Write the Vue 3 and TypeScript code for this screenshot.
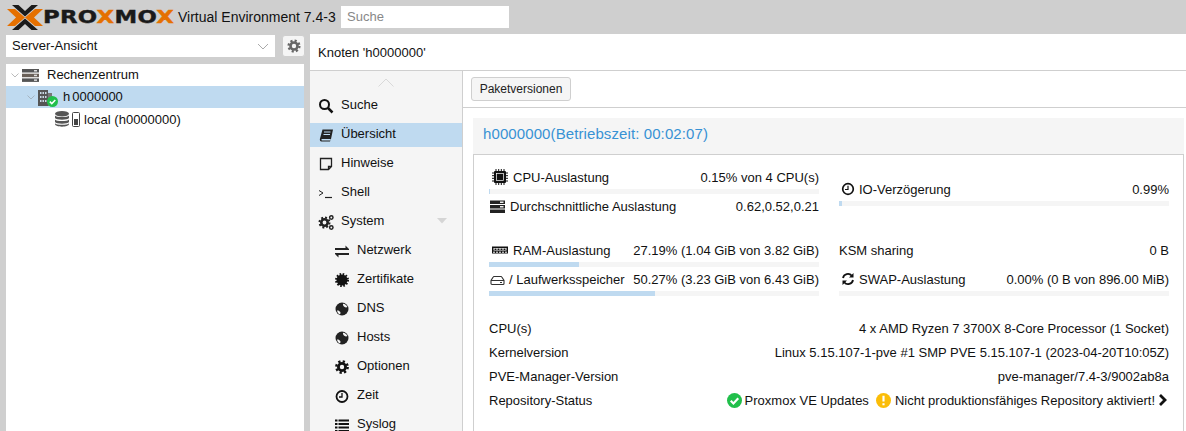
<script setup lang="ts">
const menu = [
  { label: 'Suche', icon: 'search' },
  { label: 'Übersicht', icon: 'book', active: true },
  { label: 'Hinweise', icon: 'note' },
  { label: 'Shell', icon: 'shell' },
  { label: 'System', icon: 'cogs', expand: true },
  { label: 'Netzwerk', icon: 'exchange', sub: true },
  { label: 'Zertifikate', icon: 'cert', sub: true },
  { label: 'DNS', icon: 'globe', sub: true },
  { label: 'Hosts', icon: 'globe', sub: true },
  { label: 'Optionen', icon: 'gear', sub: true },
  { label: 'Zeit', icon: 'clock', sub: true },
  { label: 'Syslog', icon: 'list', sub: true },
]
</script>

<template>
  <div class="app">
    <header class="top">
      <svg class="mark" viewBox="0 0 36 25" width="36" height="25">
        <path d="M0 4h8l10 8.500L8 21H0l9-8.500z" fill="#e57000" />
        <path d="M36 4h-8L18 12.500 28 21h8l-9-8.500z" fill="#e57000" />
        <path d="M5 0h6.500L18 6l6.500-6H31L18 11.500z" fill="#1a1a1a" />
        <path d="M5 25h6.500L18 19l6.500 6H31L18 13.500z" fill="#1a1a1a" />
      </svg>
      <span class="wordbox"><span class="word">PRO<b>X</b>MO<b>X</b></span></span>
      <span class="ve">Virtual Environment 7.4-3</span>
      <input class="search" placeholder="Suche" />
    </header>
    <div class="body">
      <aside class="left">
        <div class="viewrow">
          <div class="combo">
            <span class="lift">Server-Ansicht</span>
            <svg width="12" height="7" viewBox="0 0 12 7"><path d="M1 1l5 5 5-5" fill="none" stroke="#aaa" /></svg>
          </div>
          <button class="gearbtn">
            <svg width="14" height="14" viewBox="0 0 16 16">
              <circle cx="8" cy="8" r="6.200" fill="none" stroke="#666" stroke-width="2.600" stroke-dasharray="2.430 2.430" />
              <circle cx="8" cy="8" r="4" fill="none" stroke="#666" stroke-width="3" />
            </svg>
          </button>
        </div>
        <div class="tree">
          <div class="node n0">
            <svg class="tw" width="8" height="5" viewBox="0 0 8 5"><path d="M.5.5L4 4 7.500.5" fill="none" stroke="#bbb" /></svg>
            <svg class="dc" width="17" height="13" viewBox="0 0 17 13">
              <rect x="0" y="0" width="17" height="3.500" fill="#555" />
              <rect x="0" y="4.700" width="17" height="3.500" fill="#6a6058" />
              <rect x="0" y="9.400" width="17" height="3.500" fill="#555" />
              <rect x="12" y="1" width="3" height="1.500" fill="#ddd" />
              <rect x="12" y="5.700" width="3" height="1.500" fill="#ddd" />
              <rect x="12" y="10.400" width="3" height="1.500" fill="#ddd" />
            </svg>
            <span class="t0">Rechenzentrum</span>
          </div>
          <div class="node n1">
            <svg class="tw" width="8" height="5" viewBox="0 0 8 5"><path d="M.5.5L4 4 7.500.5" fill="none" stroke="#a5b4c0" /></svg>
            <span class="srv">
              <svg width="20" height="18" viewBox="0 0 20 18">
                <rect x="0" y="2" width="10" height="16" fill="#555" />
                <rect x="10" y="5" width="4" height="13" fill="#777" />
                <path d="M2 4h1.500v2H2zM4.500 4H6v2H4.500zM7 4h1.500v2H7zM2 8h1.500v2H2zM4.500 8H6v2H4.500zM7 8h1.500v2H7zM2 12h1.500v2H2zM4.500 12H6v2H4.500zM7 12h1.500v2H7z" fill="#c8d8e4" />
              </svg>
              <svg class="ok" width="11" height="11" viewBox="0 0 11 11"><circle cx="5.500" cy="5.500" r="5.500" fill="#21bf4b" /><path d="M2.800 5.600l2 2 3.500-3.700" fill="none" stroke="#fff" stroke-width="1.500" /></svg>
            </span>
            <span class="t1 lift">h<i class="gap"></i>0000000</span>
          </div>
          <div class="node n2">
            <svg width="14" height="16" viewBox="0 0 14 16">
              <ellipse cx="7" cy="2.800" rx="7" ry="2.800" fill="#555" />
              <path d="M0 4.500c1 2 13 2 14 0v2.500c-1 2.300-13 2.300-14 0zM0 8.500c1 2 13 2 14 0v2.500c-1 2.300-13 2.300-14 0zM0 12.300c1 2 13 2 14 0V13c0 3.500-14 3.500-14 0z" fill="#555" />
            </svg>
            <svg width="8" height="15" viewBox="0 0 8 15" class="dev">
              <rect x=".5" y=".5" width="7" height="14" rx="1" fill="#fff" stroke="#444" />
              <rect x="2" y="7" width="4" height="6" fill="#444" />
            </svg>
            <span class="t2">local (h0000000)</span>
          </div>
        </div>
      </aside>
      <main class="right">
        <div class="crumb">Knoten 'h0000000'</div>
        <div class="split">
          <nav class="nav">
            <div class="scrollup">
              <svg width="16" height="9" viewBox="0 0 16 9"><path d="M.5 8.500L8 1l7.500 7.500" fill="none" stroke="#d9d9d9" /></svg>
            </div>
            <div v-for="m in menu" :key="m.label" class="item" :class="{ active: m.active, sub: m.sub }">
              <svg class="ic" width="16" height="16" viewBox="0 0 16 16">
                <template v-if="m.icon === 'search'">
                  <circle cx="6.500" cy="6.500" r="4.500" fill="none" stroke="#111" stroke-width="2" />
                  <path d="M10 10l4.500 4.500" stroke="#111" stroke-width="2.500" />
                </template>
                <path v-else-if="m.icon === 'book'" fill="#222" d="M4.500 2.500h10.500l-2 9.500-1 2.500H3.500C2 14.500 1.500 13 2 11.500zM6 4.500v1h6.500v-1zM5.500 7v1H12V7zM4 12c-.8 0-.8 1.500 0 1.500h8.300l.4-1.500z" fill-rule="evenodd" />
                <path v-else-if="m.icon === 'note'" fill="none" stroke="#222" stroke-width="1.300" d="M2.500 2.500h11v8l-3 3h-8zM13.500 10.500h-3v3" />
                <template v-else-if="m.icon === 'shell'">
                  <path d="M1 5.500l4 2.500-4 2.500" fill="none" stroke="#222" stroke-width="1" />
                  <path d="M7 12.500h7" stroke="#222" stroke-width="1.200" />
                </template>
                <template v-else-if="m.icon === 'cogs'">
                  <circle cx="6.500" cy="8.500" r="5" fill="none" stroke="#222" stroke-width="2" stroke-dasharray="1.960 1.960" />
                  <circle cx="6.500" cy="8.500" r="3.200" fill="none" stroke="#222" stroke-width="2.600" />
                  <circle cx="13.300" cy="3.500" r="1.700" fill="none" stroke="#222" stroke-width="1.500" />
                  <circle cx="13.300" cy="13.500" r="1.700" fill="none" stroke="#222" stroke-width="1.500" />
                </template>
                <path v-else-if="m.icon === 'exchange'" fill="#222" d="M1 5h10.500V2.500L15 6v1H1zM15 10v2H4.500v2.500L1 11v-1z" />
                <template v-else-if="m.icon === 'cert'">
                  <circle cx="8" cy="8" r="5.500" fill="#111" />
                  <circle cx="8" cy="8" r="6" fill="none" stroke="#111" stroke-width="2" stroke-dasharray="1.570 1.570" />
                </template>
                <template v-else-if="m.icon === 'globe'">
                  <circle cx="8" cy="8" r="6.500" fill="#222" />
                  <path d="M9 2.700c2 .2 3.700 1.500 4.400 3.300-1 .7-2.300.4-3.100-.3C9.500 5 8.700 3.900 9 2.700zM3 9.500c1.200-.3 2.500.4 3.300 1.500.4 1 .1 2-.5 2.500C4.300 12.900 3.300 11.200 3 9.500z" fill="#f5f5f5" />
                </template>
                <template v-else-if="m.icon === 'gear'">
                  <circle cx="8" cy="8" r="5.700" fill="none" stroke="#111" stroke-width="2.400" stroke-dasharray="2.240 2.240" />
                  <circle cx="8" cy="8" r="3.600" fill="none" stroke="#111" stroke-width="2.800" />
                </template>
                <template v-else-if="m.icon === 'clock'">
                  <circle cx="8" cy="8.500" r="5.500" fill="none" stroke="#111" stroke-width="1.800" />
                  <path d="M8 5v4H5" fill="none" stroke="#111" stroke-width="1.300" />
                </template>
                <path v-else-if="m.icon === 'list'" fill="#111" d="M1 2.500h2.500v2H1zM4.500 2.500H15v2H4.500zM1 6h2.500v2H1zM4.500 6H15v2H4.500zM1 9.500h2.500v2H1zM4.500 9.500H15v2H4.500zM1 13h2.500v1.500H1zM4.500 13H15v1.500H4.500z" />
              </svg>
              <span>{{ m.label }}</span>
              <svg v-if="m.expand" class="exp" width="12" height="6" viewBox="0 0 12 6"><path d="M1 0h10L6 5.500z" fill="#d5d5d5" /></svg>
            </div>
          </nav>
          <section class="content">
            <div class="toolbar"><button class="pkg">Paketversionen</button></div>
            <div class="panel">
              <div class="ptitle">h0000000(Betriebszeit: 00:02:07)</div>
              <div class="pbody">
                <div class="stats">
                  <div class="col">
                    <div class="row">
                      <svg class="si" width="18" height="18" viewBox="0 0 18 18"><rect x="3" y="3" width="12" height="12" rx="1" fill="#111" /><rect x="5.500" y="5.500" width="7" height="7" fill="#111" stroke="#fff" stroke-width=".7" /><path d="M5 1v2M7.700 1v2M10.300 1v2M13 1v2M5 15v2M7.700 15v2M10.300 15v2M13 15v2M1 5h2M1 7.700h2M1 10.300h2M1 13h2M15 5h2M15 7.700h2M15 10.300h2M15 13h2" stroke="#111" stroke-width="1" /></svg>
                      <span>CPU-Auslastung</span><em>0.15% von 4 CPU(s)</em>
                    </div>
                    <div class="bar"><i style="width: 0.15%"></i></div>
                    <div class="row">
                      <svg class="sis" width="15" height="13" viewBox="0 0 15 13"><rect width="15" height="3.500" y=".5" fill="#222" /><rect width="15" height="3.500" y="5" fill="#222" /><rect width="15" height="3.500" y="9.500" fill="#222" /><rect x="10" y="1.500" width="3.500" height="1.500" fill="#eee" /><rect x="10" y="6" width="3.500" height="1.500" fill="#eee" /></svg>
                      <span>Durchschnittliche Auslastung</span><em>0.62,0.52,0.21</em>
                    </div>
                  </div>
                  <div class="col io">
                    <div class="row">
                      <svg class="si2" width="14" height="14" viewBox="0 0 14 14"><circle cx="7" cy="7" r="5.300" fill="none" stroke="#111" stroke-width="1.700" /><path d="M7 3.800V7.500H4" fill="none" stroke="#111" stroke-width="1.200" /></svg>
                      <span>IO-Verzögerung</span><em>0.99%</em>
                    </div>
                    <div class="bar"><i style="width: 0.99%"></i></div>
                  </div>
                </div>
                <div class="stats second">
                  <div class="col">
                    <div class="row">
                      <svg class="si" width="18" height="18" viewBox="0 0 18 18"><path fill="#111" fill-rule="evenodd" d="M1 5.500h16v7H1zM2.500 7v2.500h13V7z" /><path fill="#111" d="M3.500 7.500h2V9h-2zM6.500 7.500h2V9h-2zM9.500 7.500h2V9h-2zM12.500 7.500h2V9h-2z" /><path d="M2 11.200h14" stroke="#fff" stroke-dasharray="2 1" /></svg>
                      <span>RAM-Auslastung</span><em>27.19% (1.04 GiB von 3.82 GiB)</em>
                    </div>
                    <div class="bar"><i style="width: 27.19%"></i></div>
                    <div class="row">
                      <svg class="sid" width="15" height="13" viewBox="0 0 15 13"><path d="M4 3.500h7a1 1 0 0 1 .8.500L14 7.500v3a1 1 0 0 1-1 1H2a1 1 0 0 1-1-1v-3L3.200 4a1 1 0 0 1 .8-.5zM1 7.500h13" fill="none" stroke="#333" stroke-width="1.100" /><path d="M10 9.500h2" stroke="#333" /></svg>
                      <span>/ Laufwerksspeicher</span><em>50.27% (3.23 GiB von 6.43 GiB)</em>
                    </div>
                    <div class="bar"><i style="width: 50.27%"></i></div>
                  </div>
                  <div class="col">
                    <div class="row"><span>KSM sharing</span><em>0 B</em></div>
                    <div class="spacer"></div>
                    <div class="row">
                      <svg class="si2" width="14" height="14" viewBox="0 0 14 14"><path d="M2 6a5 5 0 0 1 8.800-2.200M12 8a5 5 0 0 1-8.800 2.200" fill="none" stroke="#111" stroke-width="1.800" /><path d="M12.500 1v4.500H8zM1.500 13V8.500H6z" fill="#111" /></svg>
                      <span>SWAP-Auslastung</span><em>0.00% (0 B von 896.00 MiB)</em>
                    </div>
                    <div class="bar"></div>
                  </div>
                </div>
                <div class="info">
                  <div class="irow"><span>CPU(s)</span><em>4 x AMD Ryzen 7 3700X 8-Core Processor (1 Socket)</em></div>
                  <div class="irow"><span>Kernelversion</span><em>Linux 5.15.107-1-pve #1 SMP PVE 5.15.107-1 (2023-04-20T10:05Z)</em></div>
                  <div class="irow"><span>PVE-Manager-Version</span><em>pve-manager/7.4-3/9002ab8a</em></div>
                  <div class="irow">
                    <span>Repository-Status</span>
                    <em class="repo">
                      <svg width="15" height="15" viewBox="0 0 14 14"><circle cx="7" cy="7" r="7" fill="#21bf4b" /><path d="M3.500 7.200l2.500 2.500 4.500-4.800" fill="none" stroke="#fff" stroke-width="2" /></svg>
                      <span class="r1">Proxmox VE Updates</span>
                      <svg width="15" height="15" viewBox="0 0 14 14"><circle cx="7" cy="7" r="7" fill="#fbbd08" /><path d="M7 2.500v5.500M7 9.500v2" stroke="#fff" stroke-width="2" /></svg>
                      <span class="r2">Nicht produktionsfähiges Repository aktiviert!</span>
                      <svg class="chev" width="9" height="12" viewBox="0 0 9 12"><path d="M2 1l5 5-5 5" fill="none" stroke="#111" stroke-width="2.800" /></svg>
                    </em>
                  </div>
                </div>
              </div>
            </div>
          </section>
        </div>
      </main>
    </div>
  </div>
</template>

<style>
html, body { margin: 0; overflow: hidden; }
</style>
<style scoped>
.app { width: 1186px; height: 431px; overflow: hidden; background: #cfcfcf; font: 13px "Liberation Sans", Arial, sans-serif; color: #111; display: flex; flex-direction: column; }
.top { height: 34px; flex: none; display: flex; align-items: center; padding-left: 7px; box-sizing: border-box; }
.mark { flex: none; }
.wordbox { width: 130px; margin-left: 1px; flex: none; overflow: visible; }
.word { display: inline-block; margin-left: -1px; font: 900 17px "DejaVu Sans", sans-serif; letter-spacing: 0.2px; color: #1a1a1a; white-space: nowrap; transform: scaleX(1.34); transform-origin: left center; -webkit-text-stroke: 0.4px currentColor; }
.word b { color: #e57000; }
.ve { font-size: 14px; margin-left: 4px; width: 163px; flex: none; white-space: nowrap; }
.search { width: 168px; height: 22px; box-sizing: border-box; border: 0; padding: 0 6px 2px; background: #fff; font: 13px "Liberation Sans", sans-serif; }
.search::placeholder { color: #888; }
.body { flex: 1; display: flex; min-height: 0; }
.left { width: 310px; flex: none; padding-left: 6px; box-sizing: border-box; }
.viewrow { display: flex; height: 22px; margin-top: 1px; }
.combo { width: 269px; background: #fff; display: flex; align-items: center; justify-content: space-between; padding: 0 6px; box-sizing: border-box; }
.lift { margin-bottom: 2px; }
.gearbtn { width: 23px; height: 22px; margin-left: 7px; border: 1px solid #cfcfcf; border-radius: 3px; background: #f5f5f5; display: flex; align-items: center; justify-content: center; padding: 0; }
.tree { margin-top: 7px; width: 298px; height: 367px; background: #fff; }
.node { height: 22px; display: flex; align-items: center; position: relative; white-space: nowrap; }
.n0 { padding-left: 5px; }
.dc { margin-left: 3px; }
.t0 { margin-left: 8px; margin-top: -1px; }
.n1 { background: #bfdaf0; padding-left: 21px; }
.n2 { padding-left: 49px; }
.srv { position: relative; display: flex; margin-left: 3px; height: 18px; width: 25px; }
.ok { position: absolute; left: 9px; top: 8px; }
.gap { display: inline-block; width: 2px; }
.dev { margin-left: 3px; margin-right: 4px; }
.right { flex: 1; background: #fff; display: flex; flex-direction: column; min-width: 0; }
.crumb { height: 37px; flex: none; box-sizing: border-box; border-bottom: 1px solid #cfcfcf; padding-left: 8px; display: flex; align-items: center; }
.split { display: flex; flex: 1; min-height: 0; }
.nav { width: 153px; flex: none; background: #f5f5f5; border-right: 1px solid #cfcfcf; overflow: hidden; box-sizing: border-box; }
.scrollup { height: 23px; display: flex; justify-content: center; padding-top: 7px; box-sizing: border-box; }
.item { height: 24px; margin-bottom: 5px; display: flex; align-items: center; padding-left: 8px; position: relative; }
.item .ic { flex: none; margin-right: 7px; }
.item > span { margin-bottom: 4px; }
.item.sub { padding-left: 24px; }
.item.active { background: #bfdaf0; }
.exp { position: absolute; right: 14px; top: 8px; }
.content { flex: 1; min-width: 0; display: flex; flex-direction: column; }
.toolbar { height: 37px; flex: none; box-sizing: border-box; border-bottom: 1px solid #cfcfcf; padding: 6px 0 0 8px; }
.pkg { display: block; height: 24px; box-sizing: border-box; width: 100px; padding: 0; border: 1px solid #cfcfcf; border-radius: 3px; background: #f5f5f5; font: 12px "Liberation Sans", sans-serif; color: #222; }
.panel { margin: 10px 0 0 10px; flex: 1; display: flex; flex-direction: column; }
.ptitle { height: 36px; background: #f5f5f5; color: #3892d4; font-size: 15px; letter-spacing: 0.1px; padding: 0 0 6px 10px; display: flex; align-items: center; flex: none; box-sizing: border-box; margin-right: 2px; }
.pbody { flex: 1; margin-right: 2px; border: 1px solid #cfcfcf; border-bottom: 0; padding: 0 14px 0 15px; box-sizing: border-box; }
.stats { display: grid; grid-template-columns: 330px 330px; column-gap: 20px; padding-top: 10px; }
.second { padding-top: 20px; }
.row { height: 24px; display: flex; align-items: center; white-space: nowrap; }
.row span { flex: none; }
em { font-style: normal; margin-left: auto; white-space: nowrap; }
.si { margin: 0 4px 0 2px; flex: none; }
.sis { margin: 0 5px 0 1px; flex: none; }
.sid { margin: 0 4px 0 1px; flex: none; }
.si2 { margin: 0 4px 0 2px; flex: none; }
.bar { height: 5px; background: #f5f5f5; }
.bar i { display: block; height: 100%; background: #bfdaf0; min-width: 1px; }
.io { padding-top: 12px; }
.spacer { height: 5px; }
.info { padding-top: 20px; }
.irow { height: 24px; display: flex; align-items: center; justify-content: space-between; }
.repo { display: flex; align-items: center; }
.r1 { margin: 0 7px 0 3px; }
.r2 { margin: 0 3px 0 4px; }
.chev { margin-right: 2px; }
</style>
